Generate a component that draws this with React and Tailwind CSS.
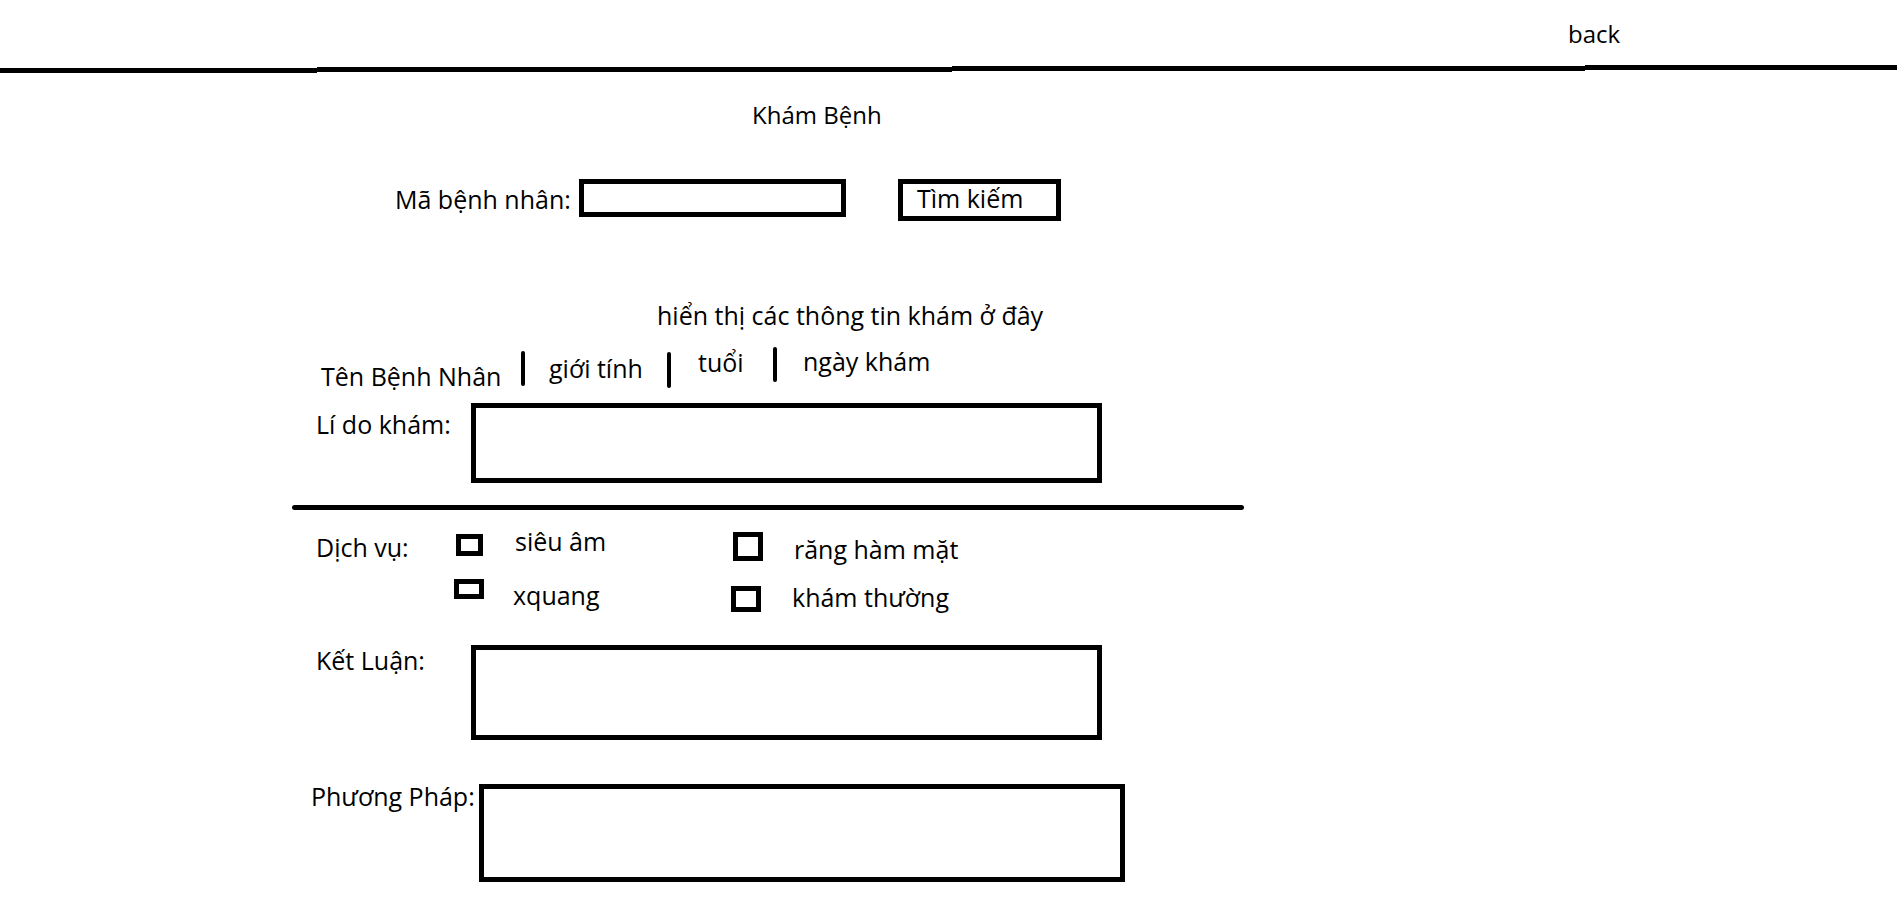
import React from "react";

export default function App() {
  return (
    <div
      className="w-[1897px] h-[912px] bg-white text-black text-[25px] leading-[32px] overflow-hidden"
      style={{ fontFamily: '"Open Sans", "Noto Sans", sans-serif' }}
    >
      {/* header */}
      <div className="h-[65px] pt-[17px] pl-[1568px]">
        <span className="text-[24px]">back</span>
      </div>
      <div className="flex items-start h-[8px]">
        <div className="w-[317px] h-[5px] bg-black mt-[3px]" />
        <div className="w-[635px] h-[5px] bg-black mt-[2px]" />
        <div className="w-[633px] h-[5px] bg-black mt-[1px]" />
        <div className="flex-1 h-[5px] bg-black" />
      </div>

      {/* title */}
      <div className="mt-[26px] pl-[752px] h-[32px] text-[24px]">Khám Bệnh</div>

      {/* search row */}
      <div className="mt-[48px] flex items-start h-[42px]">
        <div className="ml-[395px] w-[184px] mt-[4px] whitespace-nowrap">Mã bệnh nhân:</div>
        <div className="w-[267px] h-[38px] border-[5px] border-black" />
        <div className="ml-[52px] w-[163px] h-[42px] border-[5px] border-black pl-[14px] leading-[28px] whitespace-nowrap">
          Tìm kiếm
        </div>
      </div>

      {/* info caption */}
      <div className="mt-[78px] pl-[657px] h-[32px] whitespace-nowrap">hiển thị các thông tin khám ở đây</div>

      {/* info columns */}
      <div className="mt-[14px] flex items-start h-[43px] whitespace-nowrap">
        <div className="ml-[321px] w-[200px] mt-[15px]">Tên Bệnh Nhân</div>
        <div className="w-[4px] h-[35px] bg-black rounded-full mt-[6px]" />
        <div className="ml-[24px] w-[118px] mt-[7px]">giới tính</div>
        <div className="w-[4px] h-[36px] bg-black rounded-full mt-[7px]" />
        <div className="ml-[27px] w-[75px] mt-[1px]">tuổi</div>
        <div className="w-[4px] h-[35px] bg-black rounded-full mt-[2px]" />
        <div className="ml-[26px]">ngày khám</div>
      </div>

      {/* reason */}
      <div className="mt-[15px] flex items-start h-[80px]">
        <div className="ml-[316px] w-[155px] mt-[5px] whitespace-nowrap">Lí do khám:</div>
        <div className="w-[631px] h-[80px] border-[5px] border-black" />
      </div>

      {/* divider */}
      <div className="mt-[22px] ml-[292px] w-[952px] h-[5px] bg-black rounded-full" />

      {/* services row 1 */}
      <div className="mt-[15px] flex items-start h-[54px] whitespace-nowrap">
        <div className="ml-[316px] w-[140px] mt-[6px]">Dịch vụ:</div>
        <div className="w-[27px] h-[22px] border-[5px] border-black mt-[9px]" />
        <div className="ml-[32px] w-[218px]">siêu âm</div>
        <div className="w-[30px] h-[29px] border-[5px] border-black mt-[7px]" />
        <div className="ml-[31px] mt-[8px]">răng hàm mặt</div>
      </div>

      {/* services row 2 */}
      <div className="flex items-start h-[33px] whitespace-nowrap">
        <div className="ml-[454px] w-[30px] h-[20px] border-[5px] border-black" />
        <div className="ml-[29px] w-[218px]">xquang</div>
        <div className="w-[30px] h-[26px] border-[5px] border-black mt-[7px]" />
        <div className="ml-[31px] mt-[2px]">khám thường</div>
      </div>

      {/* conclusion */}
      <div className="mt-[32px] flex items-start h-[96px]">
        <div className="ml-[316px] w-[155px] whitespace-nowrap">Kết Luận:</div>
        <div className="w-[631px] h-[95px] border-[5px] border-black mt-[1px]" />
      </div>

      {/* method */}
      <div className="mt-[40px] flex items-start h-[102px]">
        <div className="ml-[311px] w-[168px] whitespace-nowrap">Phương Pháp:</div>
        <div className="w-[646px] h-[98px] border-[5px] border-black mt-[4px]" />
      </div>
    </div>
  );
}
